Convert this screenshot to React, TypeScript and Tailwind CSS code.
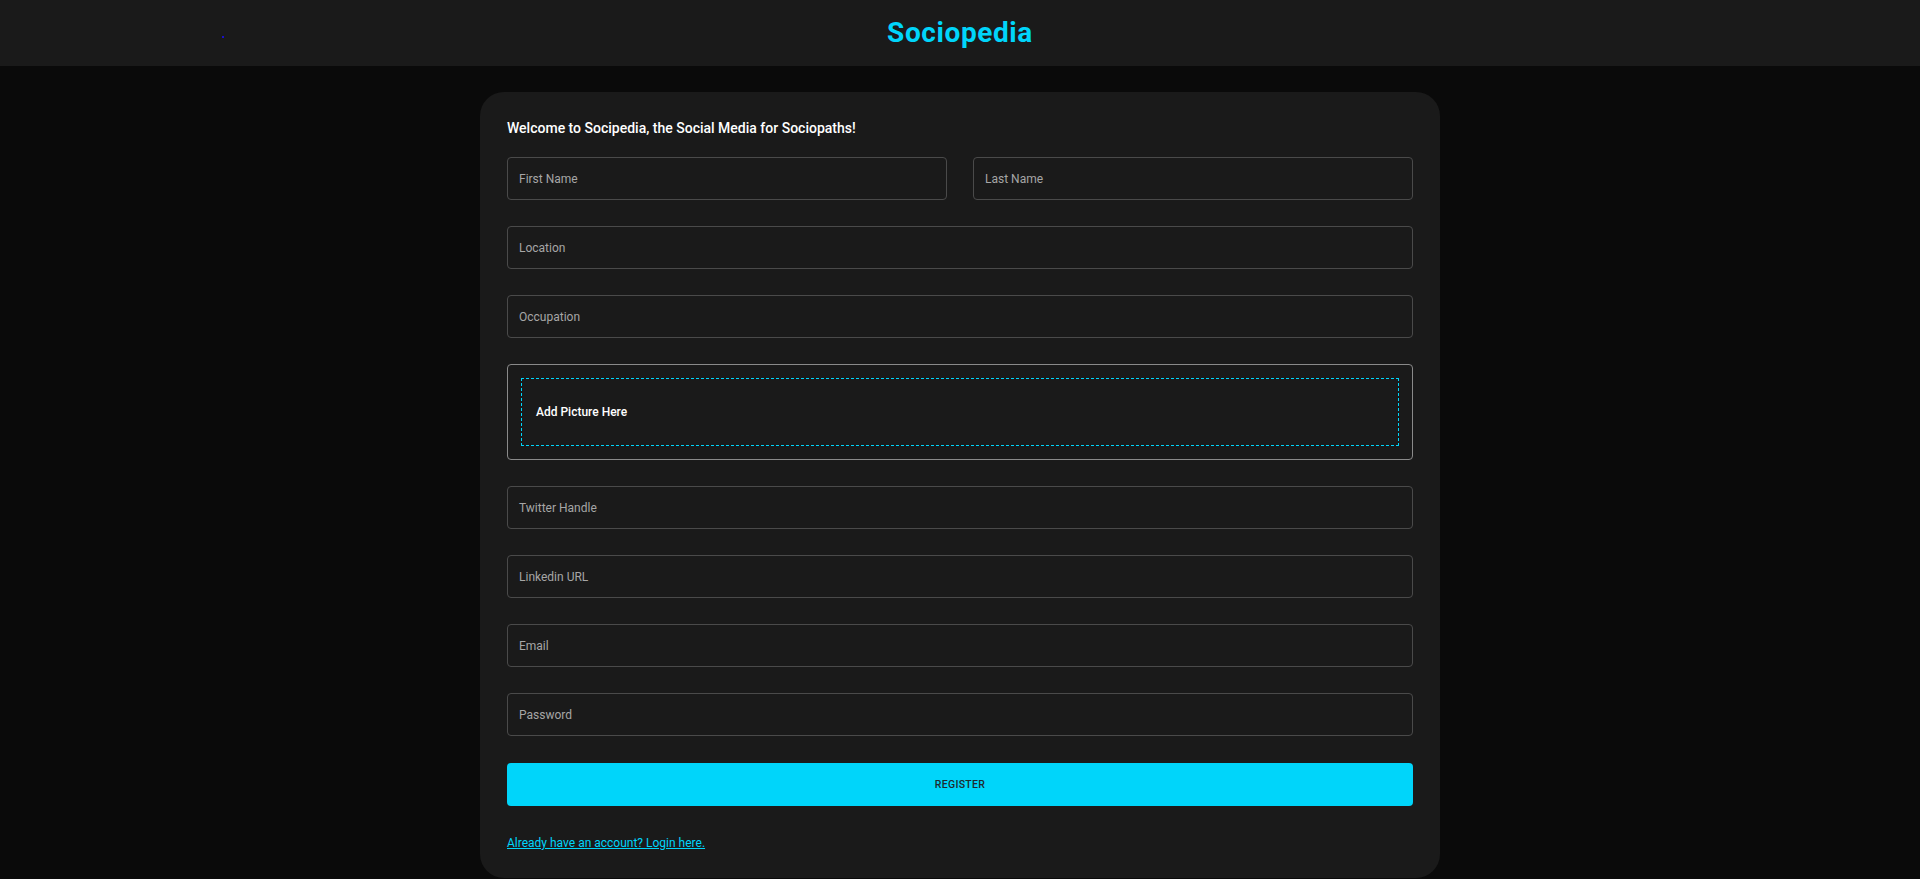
import type { ReactNode } from "react";

const FONT = "font-['Roboto','Liberation_Sans',sans-serif]";

interface FieldProps {
  label: string;
  className?: string;
}

function Field({ label, className = "" }: FieldProps): ReactNode {
  return (
    <div
      className={`flex h-[43px] items-center rounded-[4px] border border-[#4a4a4a] px-[11px] ${className}`}
    >
      <span className="text-[12px] text-[#a6a6a6]">{label}</span>
    </div>
  );
}

export default function App(): ReactNode {
  return (
    <div className={`min-h-screen bg-[#0a0a0a] ${FONT}`}>
      {/* Header */}
      <header className="relative flex h-[66px] items-center justify-center bg-[#1a1a1a]">
        <span className="absolute left-[222px] top-[36px] h-[2px] w-[2px] bg-[#1a10c8]" />
        <h1 className="text-[28px] font-bold tracking-[0.6px] text-[#00d5fa]">Sociopedia</h1>
      </header>

      {/* Register card */}
      <main className="mx-auto mt-[26px] w-[960px] rounded-[24px] bg-[#1a1a1a] px-[27px] pb-[26px] pt-[26px]">
        <p className="mb-[19px] h-[20px] text-[14px] font-medium leading-[20px] text-white">
          Welcome to Socipedia, the Social Media for Sociopaths!
        </p>

        <div className="grid grid-cols-2 gap-[26px]">
          <Field label="First Name" />
          <Field label="Last Name" />
          <Field label="Location" className="col-span-2" />
          <Field label="Occupation" className="col-span-2" />

          <div className="col-span-2 rounded-[4px] border border-[#8a8a8a] px-[13px] py-[13px]">
            <div className="flex h-[68px] items-center border border-dashed border-[#00d5fa] px-[14px]">
              <span className="text-[12px] font-medium text-white">Add Picture Here</span>
            </div>
          </div>

          <Field label="Twitter Handle" className="col-span-2" />
          <Field label="Linkedin URL" className="col-span-2" />
          <Field label="Email" className="col-span-2" />
          <Field label="Password" className="col-span-2" />
        </div>

        <button
          type="button"
          className="mt-[27px] flex h-[43px] w-full items-center justify-center rounded-[4px] bg-[#00d5fa] text-[10.5px] font-medium uppercase tracking-[0.3px] text-[#1e2a2e]"
        >
          Register
        </button>

        <a
          href="#"
          className="mt-[28px] block text-[12px] leading-[18px] text-[#00d5fa] underline"
        >
          Already have an account? Login here.
        </a>
      </main>
    </div>
  );
}
